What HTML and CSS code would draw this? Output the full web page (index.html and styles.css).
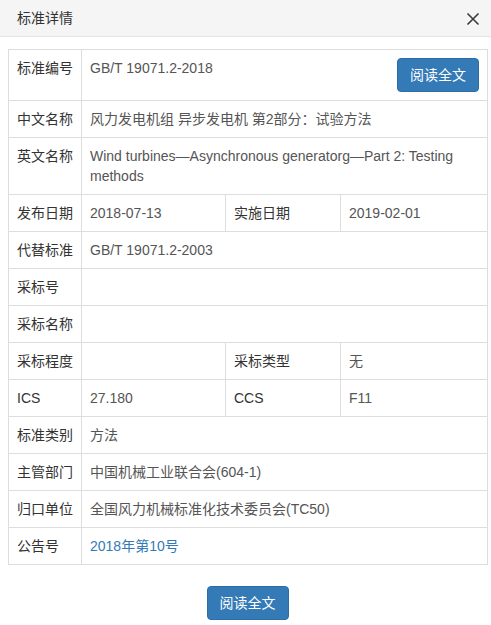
FILE: index.html
```html
<!DOCTYPE html>
<html lang="zh-CN">
<head>
<meta charset="utf-8">
<title>标准详情</title>
<link rel="stylesheet" href="styles.css">
</head>
<body>
<div class="modal">
  <div class="modal-header">
    <span class="modal-title">标准详情</span>
    <span class="close" aria-label="关闭">
      <svg width="14" height="14" viewBox="0 0 14 14"><path d="M1.5 1.5 L12.5 12.5 M12.5 1.5 L1.5 12.5" stroke="#3a3a3a" stroke-width="1.6" fill="none"/></svg>
    </span>
  </div>
  <div class="modal-body">
    <table class="detail">
      <colgroup>
        <col class="c1"><col class="c2"><col class="c3"><col class="c4">
      </colgroup>
      <tbody>
        <tr>
          <th>标准编号</th>
          <td colspan="3"><button class="btn btn-right">阅读全文</button>GB/T 19071.2-2018</td>
        </tr>
        <tr>
          <th>中文名称</th>
          <td colspan="3">风力发电机组 异步发电机 第2部分：试验方法</td>
        </tr>
        <tr>
          <th>英文名称</th>
          <td colspan="3" class="multi">Wind turbines—Asynchronous generatorg—Part 2: Testing methods</td>
        </tr>
        <tr>
          <th>发布日期</th>
          <td>2018-07-13</td>
          <th>实施日期</th>
          <td>2019-02-01</td>
        </tr>
        <tr>
          <th>代替标准</th>
          <td colspan="3">GB/T 19071.2-2003</td>
        </tr>
        <tr>
          <th>采标号</th>
          <td colspan="3"></td>
        </tr>
        <tr>
          <th>采标名称</th>
          <td colspan="3"></td>
        </tr>
        <tr>
          <th>采标程度</th>
          <td></td>
          <th>采标类型</th>
          <td>无</td>
        </tr>
        <tr>
          <th>ICS</th>
          <td>27.180</td>
          <th>CCS</th>
          <td>F11</td>
        </tr>
        <tr>
          <th>标准类别</th>
          <td colspan="3">方法</td>
        </tr>
        <tr>
          <th>主管部门</th>
          <td colspan="3">中国机械工业联合会(604-1)</td>
        </tr>
        <tr>
          <th>归口单位</th>
          <td colspan="3">全国风力机械标准化技术委员会(TC50)</td>
        </tr>
        <tr>
          <th>公告号</th>
          <td colspan="3"><a class="link" href="#">2018年第10号</a></td>
        </tr>
      </tbody>
    </table>
    <div class="footer">
      <button class="btn">阅读全文</button>
    </div>
  </div>
</div>
</body>
</html>
```

FILE: styles.css
```css
html, body {
  margin: 0;
  padding: 0;
  background: #fff;
}
body {
  font-family: "Liberation Sans", "Noto Sans CJK SC", sans-serif;
  font-size: 14px;
  line-height: 20px;
  color: #333;
}
.modal {
  width: 491px;
}
.modal-header {
  display: flex;
  align-items: center;
  justify-content: space-between;
  height: 36px;
  padding: 0 11px 0 17px;
  background: #f5f5f5;
  border-bottom: 1px solid #e5e5e5;
}
.modal-title {
  font-size: 14px;
  color: #333;
  line-height: 18px;
}
.close {
  display: flex;
  width: 14px;
  height: 14px;
  margin-top: 1px;
}
.modal-body {
  padding: 12px 4px 7px 8px;
}
.detail {
  width: 479px;
  table-layout: fixed;
  border-collapse: collapse;
}
.c1 { width: 73px; }
.c2 { width: 144px; }
.c3 { width: 115px; }
.c4 { width: 147px; }
.detail th,
.detail td {
  border: 1px solid #ddd;
  padding: 8px;
  text-align: left;
  vertical-align: top;
  font-weight: normal;
  line-height: 20px;
  height: 20px;
}
.detail th {
  color: #333;
}
.detail td {
  color: #555;
}
.link {
  color: #337ab7;
  text-decoration: none;
}
.btn {
  font-family: "Liberation Sans", "Noto Sans CJK SC", sans-serif;
  font-size: 14px;
  line-height: 20px;
  color: #fff;
  background: #337ab7;
  border: 1px solid #2e6da4;
  border-radius: 4px;
  padding: 6px 12px;
  width: 82px;
  height: 34px;
  cursor: pointer;
}
.btn-right {
  float: right;
}
.footer {
  display: flex;
  justify-content: center;
  padding-top: 21px;
}
```
